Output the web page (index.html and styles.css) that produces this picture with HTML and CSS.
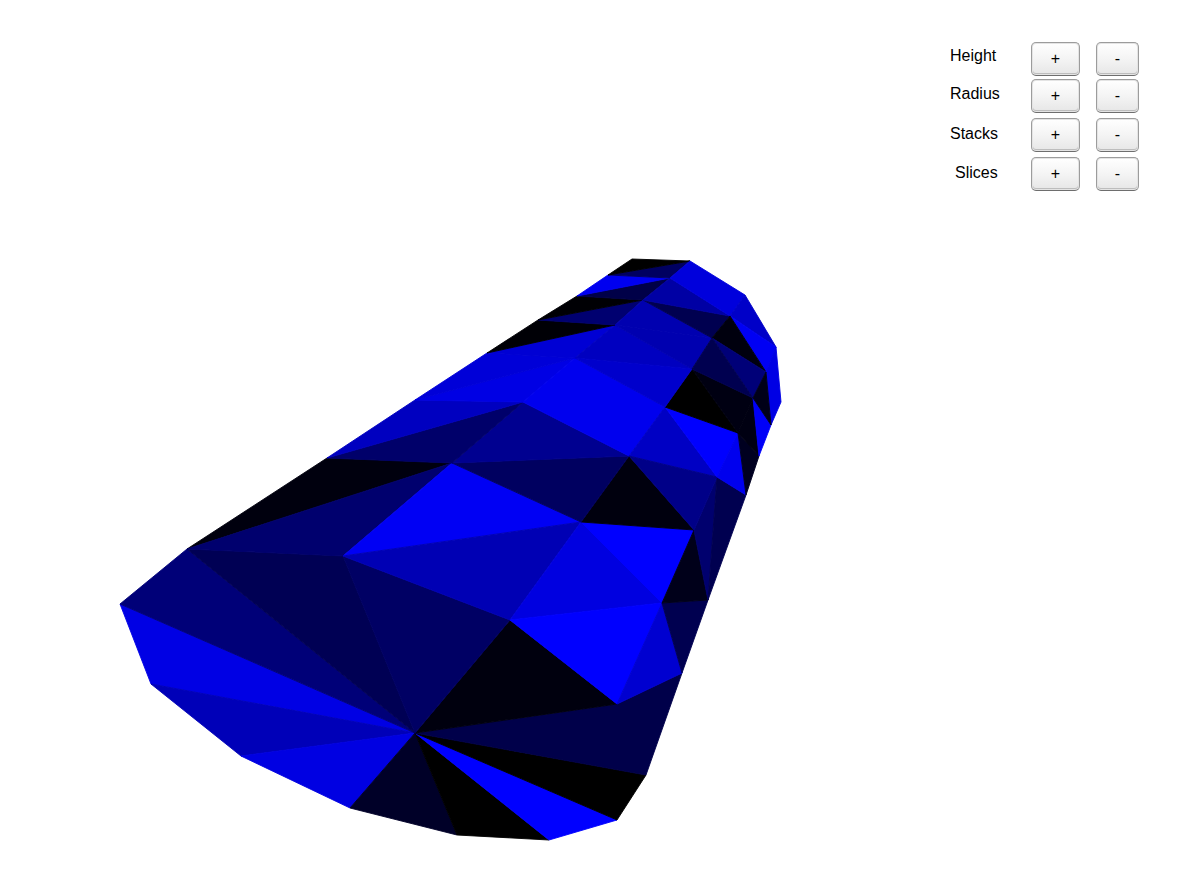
FILE: index.html
```html
<!DOCTYPE html>
<html lang="en">
<head>
<meta charset="utf-8">
<title>Cone</title>
<link rel="stylesheet" href="styles.css">
</head>
<body>
<main class="stage">
<svg class="mesh" viewBox="0 0 1203 890" width="1203" height="890" aria-hidden="true">
<polygon points="120,604 151,684 415,733" fill="#0000e4" stroke="#0000e4"/>
<polygon points="151,684 241,756 415,733" fill="#0000b8" stroke="#0000b8"/>
<polygon points="241,756 350,808 415,733" fill="#0000e2" stroke="#0000e2"/>
<polygon points="350,808 457,835 415,733" fill="#000028" stroke="#000028"/>
<polygon points="457,835 549,840 415,733" fill="#000000" stroke="#000000"/>
<polygon points="549,840 617,820 415,733" fill="#0000ff" stroke="#0000ff"/>
<polygon points="617,820 646,775 415,733" fill="#000000" stroke="#000000"/>
<polygon points="646,775 682,673 617,704 415,733" fill="#00004a" stroke="#00004a"/>
<polygon points="415,733 510,620 617,704" fill="#00000e" stroke="#00000e"/>
<polygon points="120,604 187,549 415,733" fill="#000078" stroke="#000078"/>
<polygon points="187,549 343,556 415,733" fill="#000054" stroke="#000054"/>
<polygon points="343,556 510,620 415,733" fill="#000064" stroke="#000064"/>
<polygon points="187,549 327,458 452,463" fill="#00000e" stroke="#00000e"/>
<polygon points="187,549 452,463 343,556" fill="#00006e" stroke="#00006e"/>
<polygon points="343,556 452,463 581,522" fill="#0000f4" stroke="#0000f4"/>
<polygon points="343,556 581,522 510,620" fill="#0000b4" stroke="#0000b4"/>
<polygon points="510,620 581,522 662,603" fill="#0000e0" stroke="#0000e0"/>
<polygon points="581,522 694,530 662,603" fill="#0000ff" stroke="#0000ff"/>
<polygon points="510,620 662,603 617,704" fill="#0000ff" stroke="#0000ff"/>
<polygon points="662,603 682,673 617,704" fill="#0000d0" stroke="#0000d0"/>
<polygon points="662,603 708,600 682,673" fill="#000050" stroke="#000050"/>
<polygon points="662,603 694,530 708,600" fill="#00001a" stroke="#00001a"/>
<polygon points="694,530 717,477 708,600" fill="#00006e" stroke="#00006e"/>
<polygon points="717,477 746,495 708,600" fill="#000050" stroke="#000050"/>
<polygon points="581,522 629,456 694,530" fill="#00000e" stroke="#00000e"/>
<polygon points="452,463 629,456 581,522" fill="#000060" stroke="#000060"/>
<polygon points="452,463 523,402 629,456" fill="#000090" stroke="#000090"/>
<polygon points="327,458 523,402 452,463" fill="#00006a" stroke="#00006a"/>
<polygon points="327,458 415,400 523,402" fill="#0000c0" stroke="#0000c0"/>
<polygon points="415,400 575,358 523,402" fill="#0000e4" stroke="#0000e4"/>
<polygon points="523,402 575,358 665,407 629,456" fill="#0000ee" stroke="#0000ee"/>
<polygon points="629,456 665,407 717,477" fill="#0000c4" stroke="#0000c4"/>
<polygon points="629,456 717,477 694,530" fill="#000088" stroke="#000088"/>
<polygon points="665,407 738,433 717,477" fill="#0000ff" stroke="#0000ff"/>
<polygon points="717,477 738,433 746,495" fill="#0000ee" stroke="#0000ee"/>
<polygon points="738,433 759,456 746,495" fill="#000020" stroke="#000020"/>
<polygon points="665,407 692,369 738,433" fill="#000000" stroke="#000000"/>
<polygon points="692,369 753,398 738,433" fill="#000012" stroke="#000012"/>
<polygon points="738,433 753,398 759,456" fill="#000012" stroke="#000012"/>
<polygon points="753,398 771,425 759,456" fill="#0000f8" stroke="#0000f8"/>
<polygon points="415,400 487,353 575,358" fill="#0000d8" stroke="#0000d8"/>
<polygon points="487,353 615,325 575,358" fill="#0000d4" stroke="#0000d4"/>
<polygon points="575,358 615,325 692,369" fill="#0000c0" stroke="#0000c0"/>
<polygon points="575,358 692,369 665,407" fill="#0000cc" stroke="#0000cc"/>
<polygon points="615,325 712,338 692,369" fill="#0000b0" stroke="#0000b0"/>
<polygon points="487,353 538,320 615,325" fill="#000006" stroke="#000006"/>
<polygon points="538,320 643,300 615,325" fill="#000070" stroke="#000070"/>
<polygon points="538,320 577,296 643,300" fill="#000004" stroke="#000004"/>
<polygon points="577,296 670,278 643,300" fill="#000048" stroke="#000048"/>
<polygon points="577,296 608,275 670,278" fill="#0000f0" stroke="#0000f0"/>
<polygon points="608,275 690,261 670,278" fill="#000060" stroke="#000060"/>
<polygon points="608,275 632,259 690,261" fill="#000000" stroke="#000000"/>
<polygon points="615,325 643,300 712,338" fill="#0000b0" stroke="#0000b0"/>
<polygon points="643,300 730,316 712,338" fill="#000050" stroke="#000050"/>
<polygon points="643,300 670,278 730,316" fill="#0000a4" stroke="#0000a4"/>
<polygon points="670,278 690,261 745,295 730,316" fill="#0000dc" stroke="#0000dc"/>
<polygon points="745,295 776,347 730,316" fill="#0000c8" stroke="#0000c8"/>
<polygon points="730,316 776,347 766,372" fill="#0000f4" stroke="#0000f4"/>
<polygon points="712,338 730,316 766,372" fill="#00000e" stroke="#00000e"/>
<polygon points="712,338 766,372 753,398" fill="#000078" stroke="#000078"/>
<polygon points="692,369 712,338 753,398" fill="#000050" stroke="#000050"/>
<polygon points="776,347 781,402 771,425 766,372" fill="#0000e4" stroke="#0000e4"/>
<polygon points="753,398 766,372 771,425" fill="#000018" stroke="#000018"/>
</svg>
<section class="controls">
<div class="row">
<span class="label label-height">Height</span>
<button class="btn btn-plus" type="button">+</button>
<button class="btn btn-minus" type="button">-</button>
</div>
<div class="row row-close">
<span class="label label-radius">Radius</span>
<button class="btn btn-plus" type="button">+</button>
<button class="btn btn-minus" type="button">-</button>
</div>
<div class="row">
<span class="label label-stacks">Stacks</span>
<button class="btn btn-plus" type="button">+</button>
<button class="btn btn-minus" type="button">-</button>
</div>
<div class="row">
<span class="label label-slices">Slices</span>
<button class="btn btn-plus" type="button">+</button>
<button class="btn btn-minus" type="button">-</button>
</div>
</section>
</main>
</body>
</html>
```

FILE: styles.css
```css
html, body {
  margin: 0;
  padding: 0;
  background: #fff;
  overflow: hidden;
}

.stage {
  position: relative;
  width: 1203px;
  height: 890px;
  font-family: "Liberation Sans", Arial, sans-serif;
}

.mesh {
  display: block;
}

.mesh polygon {
  stroke-width: 0.9;
  stroke-linejoin: round;
}

.controls {
  position: absolute;
  top: 42px;
  left: 950px;
  display: flex;
  flex-direction: column;
  gap: 5px;
}

.row {
  display: flex;
  height: 34px;
  align-items: flex-start;
}

.row-close {
  margin-top: -2px;
}

.label {
  width: 81px;
  box-sizing: border-box;
  font-size: 16px;
  line-height: 18px;
  color: #000;
}

.label-height { padding-top: 5px; }
.label-radius { padding-top: 6px; }
.label-stacks { padding-top: 7px; }
.label-slices { padding-top: 7px; padding-left: 5px; }

.btn {
  height: 34px;
  padding: 0;
  font-family: inherit;
  font-size: 16px;
  line-height: 1;
  color: #000;
  border: 1px solid #9c9c9c;
  border-bottom-color: #6e6e6e;
  border-radius: 5px;
  background: linear-gradient(to bottom, #ffffff 0%, #f4f4f4 50%, #e6e6e6 100%);
  box-shadow: inset 0 0 0 1px #e4e4e4, inset 0 -1px 0 1px #bdbdbd;
}

.btn-plus {
  width: 49px;
}

.btn-minus {
  width: 43px;
  margin-left: 16px;
}
```
